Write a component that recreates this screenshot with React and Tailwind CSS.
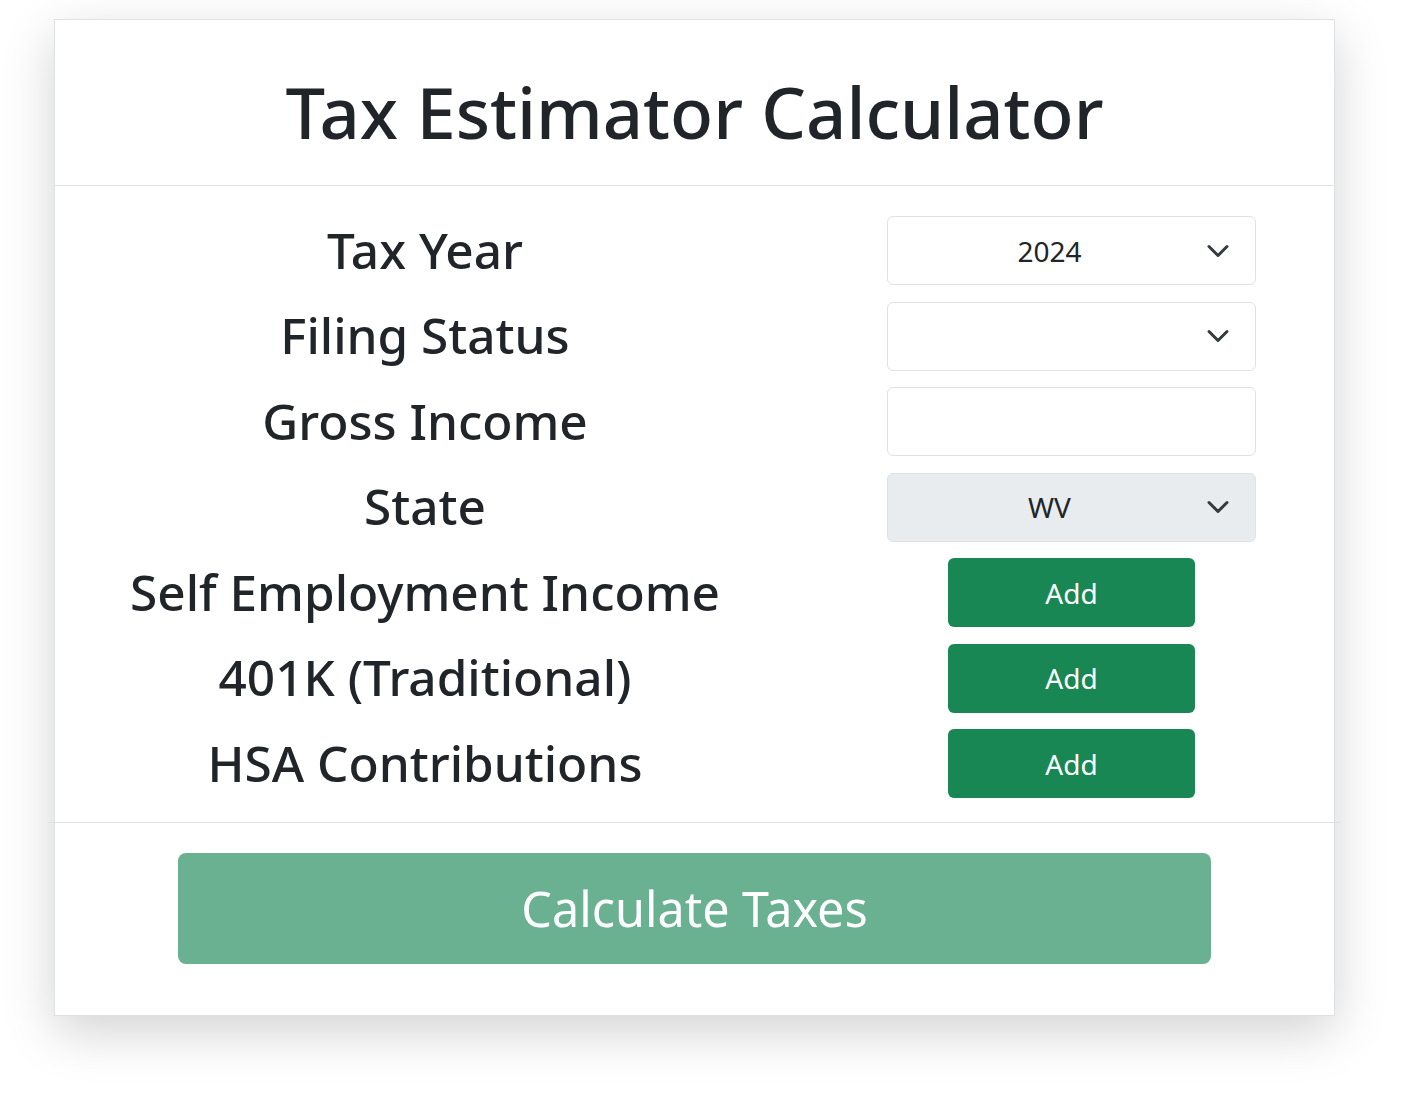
import React from "react";

const font = { fontFamily: '"Noto Sans", "Open Sans", sans-serif' };

function Chevron() {
  return (
    <svg width="24" height="24" viewBox="0 0 16 16" fill="none" className="absolute right-[25px] top-1/2 -translate-y-1/2">
      <path d="m2 5 6 6 6-6" stroke="#343a40" strokeWidth="2" strokeLinecap="round" strokeLinejoin="round" />
    </svg>
  );
}

function SelectBox({ value, gray }) {
  return (
    <div
      className={`relative h-[69px] w-[369px] rounded-[6px] border border-[#dee2e6] flex items-center justify-center pl-[12px] pr-[56px] text-[28px] text-[#212529] ${gray ? "bg-[#e9ecef]" : "bg-white"}`}
    >
      <span>{value}</span>
      <Chevron />
    </div>
  );
}

function AddButton() {
  return (
    <div className="flex w-[369px] justify-center">
      <button className="h-[69px] w-[247px] rounded-[6px] bg-[#198754] text-[28px] text-white">Add</button>
    </div>
  );
}

const rows = [
  { label: "Tax Year", ctrl: <SelectBox value="2024" /> },
  { label: "Filing Status", ctrl: <SelectBox value="" /> },
  {
    label: "Gross Income",
    ctrl: <div className="h-[69px] w-[369px] rounded-[6px] border border-[#dee2e6] bg-white" />,
  },
  { label: "State", ctrl: <SelectBox value="WV" gray /> },
  { label: "Self Employment Income", ctrl: <AddButton /> },
  { label: "401K (Traditional)", ctrl: <AddButton /> },
  { label: "HSA Contributions", ctrl: <AddButton /> },
];

export default function App() {
  return (
    <div className="min-h-[1095px] bg-white pt-[19px]" style={font}>
      <div className="ml-[54px] w-[1281px] border border-[#dee2e6] bg-white shadow-[0_1rem_3rem_rgba(0,0,0,0.175)]">
        <div className="flex h-[166px] items-center justify-center border-b border-[#dee2e6] pt-[20px]">
          <h1 className="text-[70.5px] leading-none font-medium text-[#212529]">Tax Estimator Calculator</h1>
        </div>
        <div className="flex flex-col gap-[16.5px] pt-[30px] pb-[24px]">
          {rows.map((r) => (
            <div key={r.label} className="flex h-[69px] items-center">
              <div className="w-[740px] text-center text-[49.5px] leading-none font-medium text-[#212529]">{r.label}</div>
              <div className="ml-[92px]">{r.ctrl}</div>
            </div>
          ))}
        </div>
        <div className="-mx-[7px] h-px bg-[#dee2e6]" />
        <div className="flex justify-center pt-[30px] pb-[51px]">
          <button className="h-[111px] w-[1033px] rounded-[8px] bg-[#69b190] text-[48.5px] text-white">Calculate Taxes</button>
        </div>
      </div>
    </div>
  );
}
